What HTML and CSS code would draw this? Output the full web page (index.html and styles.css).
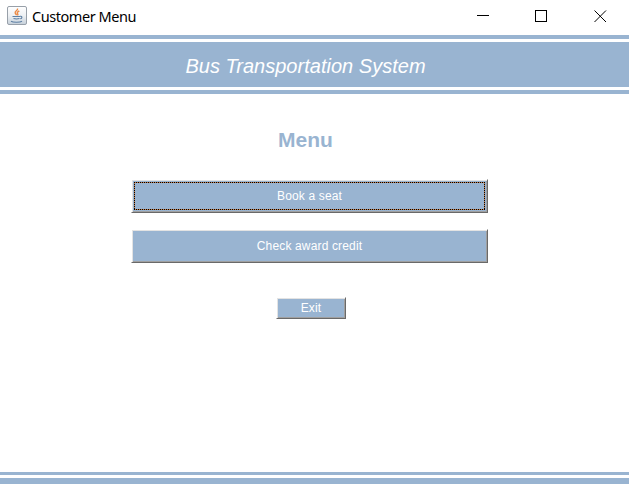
FILE: index.html
```html
<!DOCTYPE html>
<html lang="en">
<head>
<meta charset="utf-8">
<title>Customer Menu</title>
<link rel="stylesheet" href="styles.css">
</head>
<body>
<div class="window">
  <header class="titlebar">
    <svg class="app-icon" width="20" height="20" viewBox="0 0 20 20">
      <defs><linearGradient id="tile" x1="0" y1="0" x2="0" y2="1"><stop offset="0" stop-color="#fff"/><stop offset=".5" stop-color="#eef1f4"/><stop offset="1" stop-color="#c6d0da"/></linearGradient></defs>
      <rect x=".5" y=".5" width="19" height="18" rx="1.5" fill="url(#tile)" stroke="#98a0a9"/>
      <path d="M10.500 2.500c.8 2-3 2.600-2.300 4.500.3.8 1.100 1.300 1.300 2.200M12.300 5c-2 .9-2.500 1.700-1.700 2.600.5.6.3 1.200-.3 1.700" fill="none" stroke="#ec8a45" stroke-width="1.400"/>
      <path d="M5.500 10.500h7.500M6.500 12.500c2 .6 4 .6 6 0M13 10.300c2.500-.5 2.500 2 .2 2.500M4 15.300c2 1.300 9 1.300 11 0" fill="none" stroke="#5f80a4" stroke-width="1.100"/>
    </svg>
    <span class="caption">Customer Menu</span>
    <svg class="controls" width="132" height="14" viewBox="0 0 132 14" fill="none" stroke="#000" shape-rendering="crispEdges">
      <path d="M0 7.500h12"/>
      <rect x="58.500" y="2.500" width="11" height="11"/>
      <path d="M117.500 2.500l11.500 11.500M129 2.500l-11.500 11.500" shape-rendering="auto"/>
    </svg>
  </header>
  <div class="banner"><h1 class="system-name">Bus Transportation System</h1></div>
  <main class="menu">
    <h2 class="heading">Menu</h2>
    <button class="btn focused"><span class="label">Book a seat</span></button>
    <button class="btn"><span class="label">Check award credit</span></button>
    <button class="btn exit"><span class="label">Exit</span></button>
  </main>
  <footer class="footer"></footer>
</div>
</body>
</html>
```
FILE: styles.css
```css
* { box-sizing: border-box; }
body { margin: 0; background: #fff; font-family: "Liberation Sans", Arial, sans-serif; overflow: hidden; }
.window { width: 629px; height: 484px; display: flex; flex-direction: column; }
.titlebar { height: 35px; display: flex; align-items: flex-start; padding: 6px 20px 0 7px; }
.caption { margin: -1px 0 0 5px; font: 14.500px/22px "Noto Sans", sans-serif; letter-spacing: -0.45px; color: #000; white-space: nowrap; }
.controls { margin: 2px 0 0 auto; overflow: visible; }
.banner { height: 59px; border: solid #99b4d1; border-width: 4px 0; padding: 3px 0; }
.system-name { margin: 0; height: 45px; padding-right: 18px; background: #99b4d1; color: #fff; font-size: 20px; font-weight: 400; font-style: italic; line-height: 48px; text-align: center; letter-spacing: 0.02px; }
.menu { flex: 1; display: flex; flex-direction: column; align-items: flex-start; padding: 32px 0 0 131px; }
.heading { margin: 0 0 25px 147px; color: #99b4d1; font-size: 21px; line-height: 28px; font-weight: 700; }
.btn { width: 357px; height: 34px; margin: 0 0 16px; padding: 0; border: 1px solid; border-color: #fff #696969 #696969 #fff; border-radius: 0; background: #99b4d1; box-shadow: inset 1px 1px #e3e3e3, inset -1px -1px #a0a0a0; color: #fff; font: 12px/14px "Liberation Sans", Arial, sans-serif; letter-spacing: 0.15px; outline: none; }
.focused {
  background:
    repeating-linear-gradient(90deg, #000 0 1px, #c8804a 1px 2px) 2px 2px / 351px 1px no-repeat,
    repeating-linear-gradient(90deg, #000 0 1px, #c8804a 1px 2px) 2px 29px / 351px 1px no-repeat,
    repeating-linear-gradient(#000 0 1px, #c8804a 1px 2px) 2px 2px / 1px 28px no-repeat,
    repeating-linear-gradient(#000 0 1px, #c8804a 1px 2px) 352px 2px / 1px 28px no-repeat,
    #99b4d1;
}
.exit { width: 70px; height: 22px; margin: 18px 0 0 145px; }
.footer { height: 12px; border: solid #99b4d1; border-width: 3px 0 6px; }
```
